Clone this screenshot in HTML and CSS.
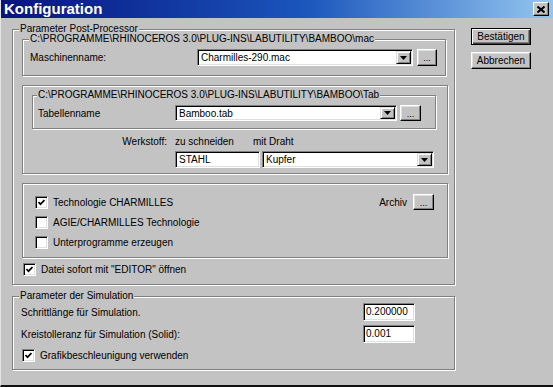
FILE: index.html
```html
<!DOCTYPE html>
<html lang="de">
<head>
    <meta charset="UTF-8">
    <title>Konfiguration</title>
    <link rel="stylesheet" href="styles.css">
</head>
<body>
    <div class="window">
        <!-- Title bar -->
        <div class="titlebar">
            <span class="title">Konfiguration</span>
            <span class="close">
                <svg width="8" height="7" viewBox="0 0 8 7"><path d="M0.5 0.5L7.5 6.5M7.5 0.5L0.5 6.5" stroke="#000" stroke-width="2"/></svg>
            </span>
        </div>

        <div class="content">
            <div class="main">
                <!-- Post-Processor parameters -->
                <div class="group pp">
                    <span class="caption">Parameter Post-Processor</span>

                    <div class="group path-mac">
                        <span class="caption">C:\PROGRAMME\RHINOCEROS 3.0\PLUG-INS\LABUTILITY\BAMBOO\mac</span>
                        <div class="row machine-row">
                            <span class="machine-label">Maschinenname:</span>
                            <div class="combo machine-combo">
                                <span class="value">Charmilles-290.mac</span>
                                <span class="drop"><svg width="7" height="4" viewBox="0 0 7 4"><path d="M0 0h7L3.5 4z"/></svg></span>
                            </div>
                            <button class="btn dots">...</button>
                        </div>
                    </div>

                    <div class="group panel table-panel">
                        <div class="group path-tab">
                            <span class="caption">C:\PROGRAMME\RHINOCEROS 3.0\PLUG-INS\LABUTILITY\BAMBOO\Tab</span>
                            <div class="row table-row">
                                <span class="table-label">Tabellenname</span>
                                <div class="combo table-combo">
                                    <span class="value">Bamboo.tab</span>
                                    <span class="drop"><svg width="7" height="4" viewBox="0 0 7 4"><path d="M0 0h7L3.5 4z"/></svg></span>
                                </div>
                                <button class="btn dots tab-dots">...</button>
                            </div>
                        </div>

                        <div class="material-head">
                            <span class="material-label">Werkstoff:</span>
                            <span class="cut-label">zu schneiden</span>
                            <span>mit Draht</span>
                        </div>
                        <div class="material-row">
                            <div class="field material-field">STAHL</div>
                            <div class="combo wire-combo">
                                <span class="value">Kupfer</span>
                                <span class="drop"><svg width="7" height="4" viewBox="0 0 7 4"><path d="M0 0h7L3.5 4z"/></svg></span>
                            </div>
                        </div>
                    </div>

                    <div class="group panel tech-panel">
                        <div class="tech-row">
                            <span class="box checked"><svg width="7" height="7" viewBox="0 0 7 7"><path d="M0.5 3L2.5 5.2L6.5 1" fill="none" stroke="#000" stroke-width="1.7"/></svg></span>
                            <span class="check-text">Technologie CHARMILLES</span>
                            <span class="archive-label">Archiv</span>
                            <button class="btn dots archive-dots">...</button>
                        </div>
                        <div class="tech-row">
                            <span class="box"></span>
                            <span class="check-text">AGIE/CHARMILLES Technologie</span>
                        </div>
                        <div class="tech-row">
                            <span class="box"></span>
                            <span class="check-text">Unterprogramme erzeugen</span>
                        </div>
                    </div>

                    <div class="check-row editor-row">
                        <span class="box checked"><svg width="7" height="7" viewBox="0 0 7 7"><path d="M0.5 3L2.5 5.2L6.5 1" fill="none" stroke="#000" stroke-width="1.7"/></svg></span>
                        <span class="check-text">Datei sofort mit "EDITOR" öffnen</span>
                    </div>
                </div>

                <!-- Simulation parameters -->
                <div class="group sim">
                    <span class="caption">Parameter der Simulation</span>
                    <div class="sim-row">
                        <span class="sim-label">Schrittlänge für Simulation.</span>
                        <div class="field sim-field">0.200000</div>
                    </div>
                    <div class="sim-row second">
                        <span class="sim-label">Kreistolleranz für Simulation (Solid):</span>
                        <div class="field sim-field">0.001</div>
                    </div>
                    <div class="check-row accel-row">
                        <span class="box checked"><svg width="7" height="7" viewBox="0 0 7 7"><path d="M0.5 3L2.5 5.2L6.5 1" fill="none" stroke="#000" stroke-width="1.7"/></svg></span>
                        <span class="check-text">Grafikbeschleunigung verwenden</span>
                    </div>
                </div>
            </div>

            <div class="actions">
                <button class="btn default">Bestätigen</button>
                <button class="btn">Abbrechen</button>
            </div>
        </div>
    </div>
</body>
</html>
```

FILE: styles.css
```css
body {
    margin: 0;
    background-color: #c3c3c3;
    font-family: 'Liberation Sans', Arial, sans-serif;
    font-size: 10px;
    color: #000;
}
.window {
    width: 553px;
    height: 387px;
    box-sizing: border-box;
    border-left: 1px solid #e4e4e4;
    border-bottom: 2px solid #111;
    background-color: #c3c3c3;
    overflow: hidden;
}
.titlebar {
    height: 18px;
    display: flex;
    align-items: center;
    justify-content: space-between;
    padding: 0 4px 0 3px;
    background: linear-gradient(to right, #08137e 0%, #1a56bc 55%, #94c6f0 100%);
}
.title {
    color: #fff;
    font-weight: bold;
    font-size: 15px;
    line-height: 18px;
}
.close {
    width: 16px;
    height: 14px;
    box-sizing: border-box;
    display: flex;
    align-items: center;
    justify-content: center;
    background-color: #c3c3c3;
    border: 1px solid;
    border-color: #fff #000 #000 #fff;
    box-shadow: inset -1px -1px #808080;
}
.content {
    display: flex;
    align-items: flex-start;
}
.main {
    margin-left: 11px;
    width: 444px;
}

/* etched group boxes */
.group {
    position: relative;
    box-sizing: border-box;
    border: 1px solid #808080;
    box-shadow: inset 1px 1px #fff, 1px 1px #fff;
}
.caption {
    position: absolute;
    top: -7px;
    left: 6px;
    padding: 0 1px;
    line-height: 12px;
    background-color: #c3c3c3;
    white-space: nowrap;
}
.pp {
    margin-top: 11px;
    width: 443px;
    height: 256px;
    padding: 9px 0 0 9px;
}
.path-mac {
    width: 424px;
    height: 37px;
}
.row {
    display: flex;
    align-items: center;
}
.machine-row {
    padding: 9px 0 0 7px;
}
.machine-label {
    flex: 0 0 167px;
}
.panel {
    margin-top: 9px;
    width: 426px;
}
.table-panel {
    height: 89px;
    padding: 9px 0 0 9px;
}
.path-tab {
    width: 404px;
    height: 34px;
}
.path-tab .caption {
    left: 4px;
}
.table-row {
    padding: 9px 0 0 5px;
}
.table-label {
    flex: 0 0 137px;
}

/* combos, fields, buttons */
.combo {
    display: flex;
    box-sizing: border-box;
    height: 17px;
    background-color: #fff;
    border: 1px solid;
    border-color: #808080 #fff #fff #808080;
    box-shadow: inset 1px 1px #000, inset -1px -1px #dfdfdf;
    padding: 2px;
}
.combo .value {
    flex: 1;
    line-height: 11px;
    padding-left: 1px;
}
.drop {
    width: 15px;
    box-sizing: border-box;
    display: flex;
    align-items: center;
    justify-content: center;
    background-color: #c3c3c3;
    border: 1px solid;
    border-color: #dfdfdf #000 #000 #dfdfdf;
    box-shadow: inset 1px 1px #fff, inset -1px -1px #808080;
    margin: -1px -1px -1px 0;
}
.machine-combo {
    width: 216px;
}
.table-combo {
    width: 222px;
    height: 16px;
}
.field {
    box-sizing: border-box;
    height: 17px;
    background-color: #fff;
    border: 1px solid;
    border-color: #808080 #fff #fff #808080;
    box-shadow: inset 1px 1px #000, inset -1px -1px #dfdfdf;
    padding: 0 3px;
    line-height: 15px;
}
.btn {
    font-family: 'Liberation Sans', Arial, sans-serif;
    font-size: 10px;
    color: #000;
    box-sizing: border-box;
    background-color: #c3c3c3;
    border: 1px solid;
    border-color: #fff #000 #000 #fff;
    box-shadow: inset -1px -1px #808080, inset 1px 1px #dfdfdf;
    padding: 0;
    margin: 0;
}
.dots {
    width: 20px;
    height: 17px;
    margin-left: 4px;
    line-height: 16px;
    font-size: 9px;
}
.tab-dots {
    width: 21px;
    height: 16px;
    margin-left: 3px;
}

/* material */
.material-head {
    display: flex;
    margin-top: 7px;
    line-height: 12px;
}
.material-label {
    width: 135px;
    text-align: right;
}
.cut-label {
    margin-left: 8px;
    width: 78px;
}
.material-row {
    display: flex;
    margin-top: 3px;
    padding-left: 143px;
}
.material-field {
    width: 85px;
}
.wire-combo {
    width: 172px;
    margin-left: 2px;
}

/* checkboxes */
.box {
    width: 13px;
    height: 13px;
    box-sizing: border-box;
    flex: 0 0 13px;
    display: flex;
    align-items: center;
    justify-content: center;
    background-color: #fff;
    border: 1px solid;
    border-color: #808080 #fff #fff #808080;
    box-shadow: inset 1px 1px #000, inset -1px -1px #dfdfdf;
}
.check-text {
    margin-left: 5px;
}
.tech-panel {
    height: 75px;
    padding: 10px 13px 0 12px;
}
.tech-row {
    display: flex;
    align-items: center;
    height: 16px;
    margin-bottom: 4px;
}
.archive-label {
    margin-left: auto;
}
.archive-dots {
    width: 21px;
    height: 16px;
    margin-left: 6px;
}
.check-row {
    display: flex;
    align-items: center;
}
.editor-row {
    margin: 5px 0 0 1px;
}

/* simulation */
.sim {
    margin-top: 11px;
    width: 443px;
    height: 74px;
    padding: 6px 0 0 8px;
}
.sim-row {
    display: flex;
    align-items: center;
}
.sim-row.second {
    margin-top: 4px;
}
.sim-label {
    flex: 0 0 342px;
}
.sim-field {
    width: 52px;
    height: 18px;
    padding: 0 2px;
    line-height: 16px;
}
.accel-row {
    margin: 6px 0 0 1px;
}

/* dialog buttons */
.actions {
    display: flex;
    flex-direction: column;
    gap: 7px;
    margin: 10px 0 0 15px;
}
.actions .btn {
    width: 60px;
    height: 17px;
    font-size: 10px;
}
.actions .default {
    border: 1px solid #000;
    box-shadow: inset 1px 1px #fff, inset -1px -1px #404040, inset -2px -2px #808080;
}
```
